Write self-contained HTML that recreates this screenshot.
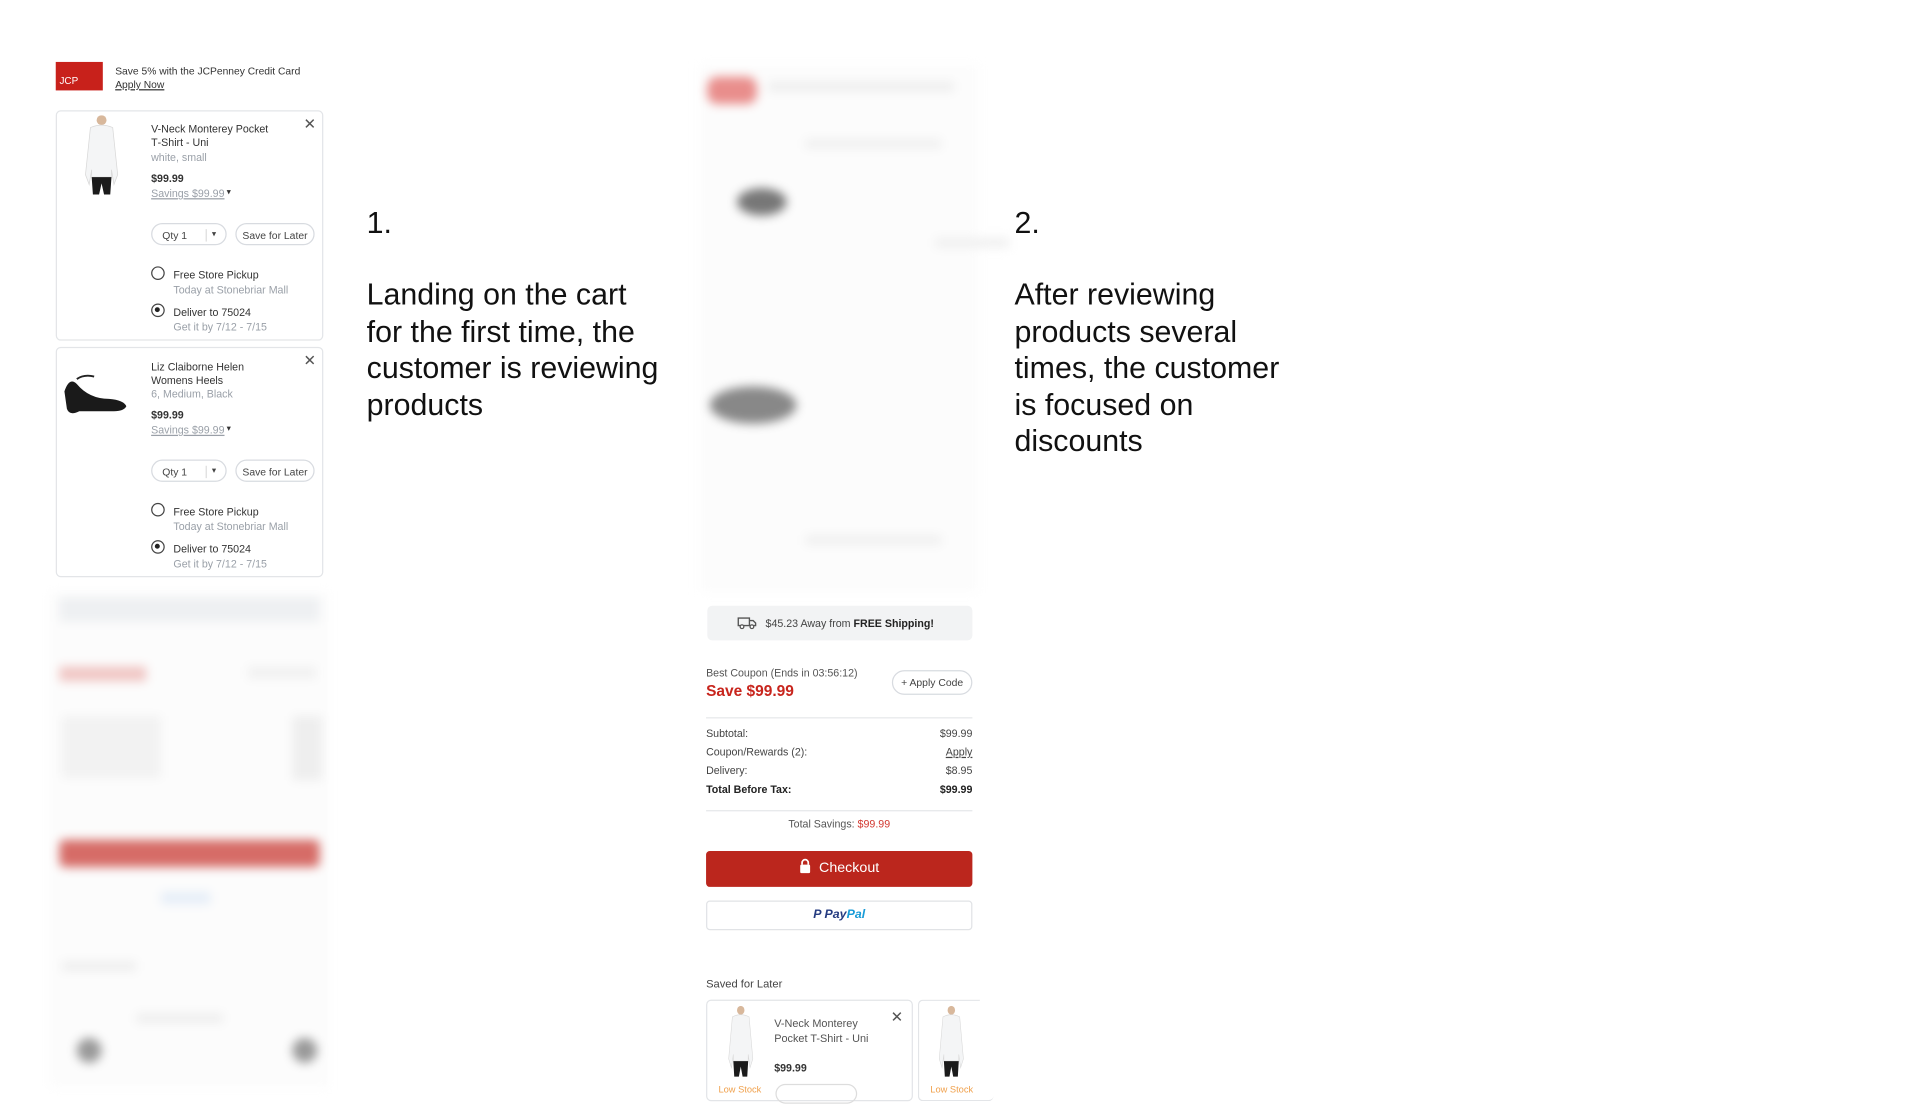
<!DOCTYPE html>
<html><head><meta charset="utf-8">
<style>
html,body{margin:0;padding:0;background:#fff;width:1920px;height:1080px;overflow:hidden}
#w{position:absolute;left:0;top:0;width:1550px;height:872px;transform:scale(1.23871);transform-origin:0 0;font-family:"Liberation Sans",sans-serif;color:#333}
.a{position:absolute}
.card{position:absolute;border:1px solid #e3e5e8;border-radius:4px;background:#fff}
.t{font-size:8.6px;color:#333;line-height:10.5px}
.g{color:#9aa0a8}
.pill{position:absolute;border:1px solid #d8dbe0;border-radius:10px;height:18px;font-size:8.4px;line-height:18px;color:#444;box-sizing:border-box}
.radio{position:absolute;width:11px;height:11px;border:1.3px solid #444;border-radius:50%;box-sizing:border-box}
.radio.on::after{content:"";position:absolute;left:2px;top:2px;width:4.4px;height:4.4px;border-radius:50%;background:#222}
.x{position:absolute;font-size:12px;color:#555;line-height:12px}
.big{font-family:"Liberation Sans",sans-serif;font-size:24.5px;line-height:29.5px;color:#111}
.blur{filter:blur(4px)}
.row{position:absolute;left:570px;width:215px;font-size:8.6px;color:#444;display:flex;justify-content:space-between}
</style></head><body><div id="w">

<div class="a" style="left:45px;top:50px;width:38px;height:23px;background:#c8211b;"></div>
<div class="a" style="left:48px;top:61px;font-size:8px;color:#fff">JCP</div>
<div class="a t" style="left:93px;top:52px;font-size:8.3px">Save 5% with the JCPenney Credit Card</div>
<div class="a t" style="left:93px;top:63px;font-size:8.3px;text-decoration:underline">Apply Now</div>

<svg width="0" height="0" style="position:absolute"><defs>
<g id="shirt"><ellipse cx="20" cy="4" rx="4" ry="4" fill="#d8b89c"/><path d="M11 10 Q20 6 29 10 L33 48 L30 56 L28 44 L28 50 L12 50 L12 44 L10 56 L7 48 Z" fill="#f4f5f6" stroke="#d8d8d8" stroke-width="0.6"/><path d="M12 50 L28 50 L27 64 L22 64 L20 55 L18 64 L13 64 Z" fill="#1b1b1b"/></g>
<g id="shoe"><path d="M2 20 Q6 8 12 14 Q22 26 38 26 Q50 27 52 32 Q50 36 42 36 L14 36 Q6 40 4 34 Z" fill="#1a1a1a"/><path d="M12 10 Q18 6 26 8" stroke="#222" stroke-width="1.5" fill="none"/></g>
</defs></svg>

<div class="card" style="left:45px;top:89px;width:214px;height:184px"></div>
<svg class="a" style="left:62px;top:93px" width="40" height="65" viewBox="0 0 40 65"><use href="#shirt"/></svg>
<div class="a t" style="left:122px;top:99px;width:106px">V-Neck Monterey Pocket T&#8209;Shirt - Uni</div>
<div class="a t g" style="left:122px;top:122px">white, small</div>
<div class="a t" style="left:122px;top:139px;font-weight:bold">$99.99</div>
<div class="a t g" style="left:122px;top:151px;text-decoration:underline">Savings $99.99</div><div class="a" style="left:183px;top:151px;font-size:7px">▾</div>
<div class="x" style="left:245px;top:94px">✕</div>
<div class="pill" style="left:122px;top:180px;width:61px;padding-left:8px">Qty 1<span style="position:absolute;left:43px;top:4px;height:10px;border-left:1px solid #ddd"></span><span style="position:absolute;left:48px;font-size:7px">▾</span></div>
<div class="pill" style="left:190px;top:180px;width:64px;text-align:center">Save for Later</div>
<div class="radio" style="left:122px;top:215px"></div>
<div class="a t" style="left:140px;top:217px">Free Store Pickup</div>
<div class="a t g" style="left:140px;top:229px">Today at Stonebriar Mall</div>
<div class="radio on" style="left:122px;top:245px"></div>
<div class="a t" style="left:140px;top:247px">Deliver to 75024</div>
<div class="a t g" style="left:140px;top:259px">Get it by 7/12 - 7/15</div>

<div class="card" style="left:45px;top:280px;width:214px;height:184px"></div>
<svg class="a" style="left:50px;top:296px" width="56" height="42" viewBox="0 0 56 42"><use href="#shoe"/></svg>
<div class="a t" style="left:122px;top:291px;width:106px">Liz Claiborne Helen Womens Heels</div>
<div class="a t g" style="left:122px;top:313px">6, Medium, Black</div>
<div class="a t" style="left:122px;top:330px;font-weight:bold">$99.99</div>
<div class="a t g" style="left:122px;top:342px;text-decoration:underline">Savings $99.99</div><div class="a" style="left:183px;top:342px;font-size:7px">▾</div>
<div class="x" style="left:245px;top:285px">✕</div>
<div class="pill" style="left:122px;top:371px;width:61px;padding-left:8px">Qty 1<span style="position:absolute;left:43px;top:4px;height:10px;border-left:1px solid #ddd"></span><span style="position:absolute;left:48px;font-size:7px">▾</span></div>
<div class="pill" style="left:190px;top:371px;width:64px;text-align:center">Save for Later</div>
<div class="radio" style="left:122px;top:406px"></div>
<div class="a t" style="left:140px;top:408px">Free Store Pickup</div>
<div class="a t g" style="left:140px;top:420px">Today at Stonebriar Mall</div>
<div class="radio on" style="left:122px;top:436px"></div>
<div class="a t" style="left:140px;top:438px">Deliver to 75024</div>
<div class="a t g" style="left:140px;top:450px">Get it by 7/12 - 7/15</div>

<div class="a blur" style="left:40px;top:478px;width:226px;height:400px;background:#fcfcfc">
 <div class="a" style="left:8px;top:4px;width:210px;height:20px;background:#eef0f2"></div>
 <div class="a" style="left:8px;top:60px;width:70px;height:12px;background:#f0c6c4"></div>
 <div class="a" style="left:160px;top:60px;width:55px;height:10px;background:#f1f1f1"></div>
 <div class="a" style="left:10px;top:100px;width:80px;height:50px;background:#f2f2f2"></div>
 <div class="a" style="left:196px;top:100px;width:24px;height:52px;background:#eee"></div>
 <div class="a" style="left:8px;top:200px;width:210px;height:22px;background:#d66c67;border-radius:4px"></div>
 <div class="a" style="left:90px;top:242px;width:40px;height:10px;background:#e6eef8"></div>
 <div class="a" style="left:10px;top:298px;width:60px;height:8px;background:#eee"></div>
 <div class="a" style="left:22px;top:360px;width:20px;height:20px;background:#999;border-radius:50%"></div>
 <div class="a" style="left:196px;top:360px;width:20px;height:20px;background:#999;border-radius:50%"></div>
 <div class="a" style="left:70px;top:340px;width:70px;height:8px;background:#eee"></div>
</div>

<div class="a big" style="left:296px;top:166px">1.</div>
<div class="a big" style="left:296px;top:224px;width:240px">Landing on the cart for the first time, the customer is reviewing products</div>
<div class="a big" style="left:819px;top:166px">2.</div>
<div class="a big" style="left:819px;top:224px;width:225px">After reviewing products several times, the customer is focused on discounts</div>

<div class="a blur" style="left:565px;top:52px;width:225px;height:426px;background:#fcfcfc">
 <div class="a" style="left:6px;top:10px;width:40px;height:22px;background:#e98e8c;border-radius:8px"></div>
 <div class="a" style="left:55px;top:14px;width:150px;height:8px;background:#eee"></div>
 <div class="a" style="left:30px;top:100px;width:40px;height:22px;background:#777;border-radius:50%"></div>
 <div class="a" style="left:8px;top:260px;width:70px;height:30px;background:#888;border-radius:50%"></div>
 <div class="a" style="left:85px;top:60px;width:110px;height:8px;background:#f0f0f0"></div>
 <div class="a" style="left:190px;top:140px;width:60px;height:8px;background:#f0f0f0"></div>
 <div class="a" style="left:85px;top:380px;width:110px;height:8px;background:#f0f0f0"></div>
</div>

<div class="a" style="left:571px;top:489px;width:214px;height:28px;background:#f2f3f4;border-radius:4px"></div>
<svg class="a" style="left:594px;top:497px" width="18" height="11" viewBox="0 0 18 11"><path d="M2 2h9v6H2zM11 4h3l2 2v2h-5z" fill="none" stroke="#555" stroke-width="1.1"/><circle cx="5" cy="9" r="1.5" fill="#fff" stroke="#555"/><circle cx="13" cy="9" r="1.5" fill="#fff" stroke="#555"/></svg>
<div class="a" style="left:618px;top:498px;font-size:8.6px;color:#444">$45.23 Away from <b style="color:#222">FREE Shipping!</b></div>

<div class="a" style="left:570px;top:538px;font-size:8.6px;color:#555">Best Coupon (Ends in 03:56:12)</div>
<div class="a" style="left:570px;top:551px;font-size:12.5px;color:#c8251d;font-weight:bold">Save $99.99</div>
<div class="pill" style="left:720px;top:541px;width:65px;height:20px;line-height:19px;text-align:center">+ Apply Code</div>
<div class="a" style="left:570px;top:579px;width:215px;border-top:1px solid #e6e8ea"></div>
<div class="row" style="top:587px"><span>Subtotal:</span><span>$99.99</span></div>
<div class="row" style="top:602px"><span>Coupon/Rewards (2):</span><span style="text-decoration:underline">Apply</span></div>
<div class="row" style="top:617px"><span>Delivery:</span><span>$8.95</span></div>
<div class="row" style="top:632px;font-weight:bold;color:#222"><span>Total Before Tax:</span><span>$99.99</span></div>
<div class="a" style="left:570px;top:654px;width:215px;border-top:1px solid #e6e8ea"></div>
<div class="a" style="left:570px;top:660px;width:215px;text-align:center;font-size:8.6px;color:#555">Total Savings: <span style="color:#d2372f">$99.99</span></div>
<div class="a" style="left:570px;top:687px;width:215px;height:29px;background:#bb261d;border-radius:3px;color:#fff;font-size:11.5px;text-align:center;line-height:29px"><svg width="10" height="12" viewBox="0 0 10 12" style="vertical-align:-1px;margin-right:6px"><path d="M2.5 5V3.5a2.5 2.5 0 0 1 5 0V5" stroke="#fff" stroke-width="1.4" fill="none"/><rect x="1" y="5" width="8" height="7" rx="1" fill="#fff"/></svg>Checkout</div>
<div class="a" style="left:570px;top:727px;width:215px;height:24px;border:1px solid #e1e3e6;border-radius:3px;box-sizing:border-box;text-align:center;line-height:22px;font-size:10px;font-weight:bold;font-style:italic"><span style="color:#253b80">P</span> <span style="color:#253b80">Pay</span><span style="color:#179bd7">Pal</span></div>

<div class="a" style="left:570px;top:789px;font-size:9px;color:#444">Saved for Later</div>
<div class="card" style="left:570px;top:807px;width:165px;height:80px"></div>
<svg class="a" style="left:583px;top:812px" width="30" height="58" viewBox="0 0 40 65" preserveAspectRatio="none"><use href="#shirt"/></svg>
<div class="a" style="left:625px;top:820px;font-size:8.8px;line-height:12px;color:#555;width:95px">V-Neck Monterey Pocket T-Shirt - Uni</div>
<div class="a" style="left:625px;top:857px;font-size:8.6px;color:#333;font-weight:bold">$99.99</div>
<div class="x" style="left:719px;top:815px">✕</div>
<div class="a" style="left:580px;top:875px;font-size:7.5px;color:#f0a04b">Low Stock</div>
<div class="a" style="left:626px;top:875px;width:64px;height:14px;border:1px solid #ddd;border-radius:8px"></div>
<div class="card" style="left:741px;top:807px;width:60px;height:80px;border-right:none"></div>
<svg class="a" style="left:753px;top:812px" width="30" height="58" viewBox="0 0 40 65" preserveAspectRatio="none"><use href="#shirt"/></svg>
<div class="a" style="left:751px;top:875px;font-size:7.5px;color:#f0a04b">Low Stock</div>
<div class="a" style="left:791px;top:800px;width:40px;height:80px;background:#fff"></div>

</div></body></html>
